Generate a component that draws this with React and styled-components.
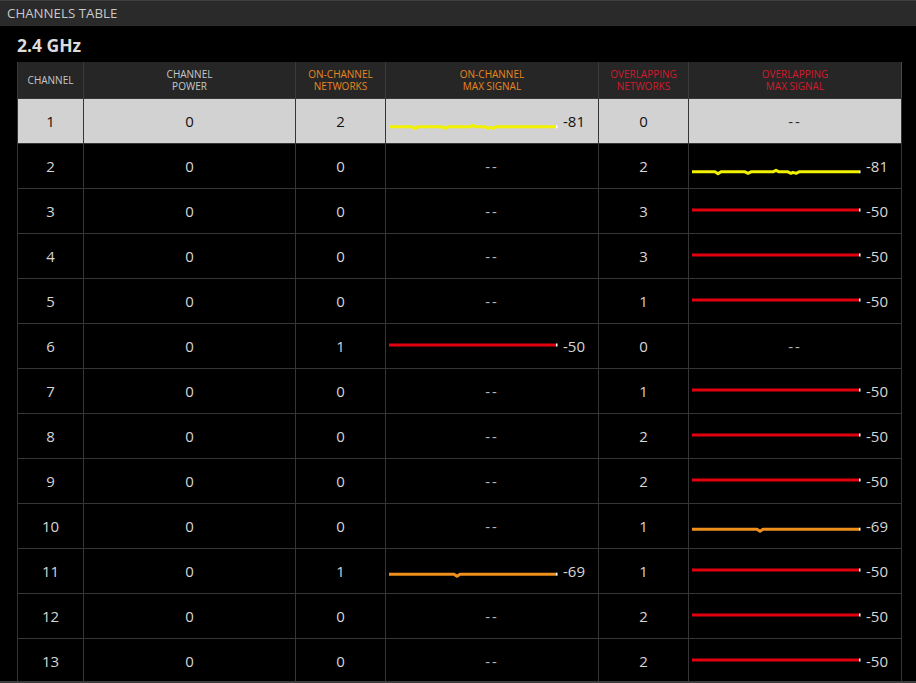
import React from "react";
import styled, { createGlobalStyle } from "styled-components";

const GlobalStyle = createGlobalStyle`
  html, body {
    margin: 0;
    padding: 0;
    background: #000;
  }
  body {
    font-family: "Open Sans", "Noto Sans", "Liberation Sans", sans-serif;
  }
`;

const COLORS = {
  yellow: "#f2f200",
  red: "#e3000f",
  orange: "#f0901c",
};

// little bumps on the lines, x offset and y delta
const SHAPES = {
  yellow: [
    [24, 0], [27, 2], [30, 0], [54, 0], [57, 1.5], [60, 0], [82, 0], [85, -1.5],
    [88, 0], [97, 0], [100, 1.5], [102, 0.5], [105, 1.5], [108, 0],
  ],
  orange: [[66, 0], [69, 2], [72, 0]],
  red: [],
};

const rows = [
  { ch: 1, power: 0, on: 2, onSig: { v: -81, c: "yellow" }, ov: 0, ovSig: null },
  { ch: 2, power: 0, on: 0, onSig: null, ov: 2, ovSig: { v: -81, c: "yellow" } },
  { ch: 3, power: 0, on: 0, onSig: null, ov: 3, ovSig: { v: -50, c: "red" } },
  { ch: 4, power: 0, on: 0, onSig: null, ov: 3, ovSig: { v: -50, c: "red" } },
  { ch: 5, power: 0, on: 0, onSig: null, ov: 1, ovSig: { v: -50, c: "red" } },
  { ch: 6, power: 0, on: 1, onSig: { v: -50, c: "red" }, ov: 0, ovSig: null },
  { ch: 7, power: 0, on: 0, onSig: null, ov: 1, ovSig: { v: -50, c: "red" } },
  { ch: 8, power: 0, on: 0, onSig: null, ov: 2, ovSig: { v: -50, c: "red" } },
  { ch: 9, power: 0, on: 0, onSig: null, ov: 2, ovSig: { v: -50, c: "red" } },
  { ch: 10, power: 0, on: 0, onSig: null, ov: 1, ovSig: { v: -69, c: "orange" } },
  { ch: 11, power: 0, on: 1, onSig: { v: -69, c: "orange" }, ov: 1, ovSig: { v: -50, c: "red" } },
  { ch: 12, power: 0, on: 0, onSig: null, ov: 2, ovSig: { v: -50, c: "red" } },
  { ch: 13, power: 0, on: 0, onSig: null, ov: 2, ovSig: { v: -50, c: "red" } },
];

const Window = styled.div`
  height: 683px;
  display: flex;
  flex-direction: column;
  overflow: hidden;
  box-sizing: border-box;
  border-bottom: 2px solid #3c3c3c;
`;

const TitleBar = styled.div`
  height: 26px;
  flex: none;
  box-sizing: border-box;
  border-top: 1px solid #3e3e3e;
  background: #2a2a2a;
  color: #c8c8c8;
  font-size: 13.3px;
  line-height: 25px;
  padding-left: 7px;
`;

const Content = styled.div`
  flex: 1;
  min-height: 0;
  overflow: hidden;
  padding: 0 15px 0 17px;
`;

const BandTitle = styled.h2`
  margin: 0;
  height: 36px;
  line-height: 38px;
  font-size: 17.5px;
  font-weight: 700;
  color: #dcdcdc;
`;

const Table = styled.table`
  border-collapse: collapse;
  table-layout: fixed;
  width: 884px;
  border-right: 1px solid #4a4a4a;
`;

const HeadCell = styled.th`
  height: 36px;
  padding: 0;
  background: #262626;
  border-left: 1px solid #3a3a3a;
  color: ${(p) => p.$color || "#c8c8c8"};
  font-size: 10px;
  font-weight: 400;
  line-height: 12px;
  text-align: center;
  vertical-align: middle;
  white-space: pre-line;
`;

const Row = styled.tr`
  background: ${(p) => (p.$selected ? "#d2d2d2" : "#000")};
  color: ${(p) => (p.$selected ? "#111" : "#d6d6d6")};
`;

const Cell = styled.td`
  height: 44px;
  padding: 0;
  border: 1px solid #363636;
  font-size: 15px;
  text-align: center;
  vertical-align: middle;
`;

const SignalWrap = styled.div`
  height: 44px;
  display: flex;
  align-items: center;
  padding-left: 2px;
`;

const Dash = styled.span`
  letter-spacing: 2px;
  opacity: 0.85;
`;

const SignalValue = styled.span`
  margin-left: 5px;
  font-size: 15px;
`;

function Spark({ signal }) {
  const w = 170;
  const base = 21 + (-50 - signal.v) * 0.22;
  const shape = SHAPES[signal.c];
  const pts = [[1, 0], ...shape, [w - 2, 0]]
    .map(([x, d]) => `${x},${(base + d).toFixed(1)}`)
    .join(" ");
  return (
    <svg width={w} height="44" style={{ display: "block", flex: "none" }}>
      <polyline
        points={pts}
        fill="none"
        stroke={COLORS[signal.c]}
        strokeWidth="3"
        strokeLinejoin="round"
      />
      <rect x={w - 2} y={base - 1.5} width="1.5" height="3" fill="#fff" />
    </svg>
  );
}

function SignalCell({ signal }) {
  if (!signal) {
    return (
      <Cell>
        <Dash>--</Dash>
      </Cell>
    );
  }
  return (
    <Cell>
      <SignalWrap>
        <Spark signal={signal} />
        <SignalValue>{signal.v}</SignalValue>
      </SignalWrap>
    </Cell>
  );
}

export default function App() {
  return (
    <>
      <GlobalStyle />
      <Window>
        <TitleBar>CHANNELS TABLE</TitleBar>
        <Content>
          <BandTitle>2.4 GHz</BandTitle>
          <Table>
            <colgroup>
              <col style={{ width: 66 }} />
              <col style={{ width: 212 }} />
              <col style={{ width: 90 }} />
              <col style={{ width: 213 }} />
              <col style={{ width: 90 }} />
              <col style={{ width: 213 }} />
            </colgroup>
            <thead>
              <tr>
                <HeadCell>CHANNEL</HeadCell>
                <HeadCell>{"CHANNEL\nPOWER"}</HeadCell>
                <HeadCell $color="#e8871e">{"ON-CHANNEL\nNETWORKS"}</HeadCell>
                <HeadCell $color="#e8871e">{"ON-CHANNEL\nMAX SIGNAL"}</HeadCell>
                <HeadCell $color="#d01c2c">{"OVERLAPPING\nNETWORKS"}</HeadCell>
                <HeadCell $color="#d01c2c">{"OVERLAPPING\nMAX SIGNAL"}</HeadCell>
              </tr>
            </thead>
            <tbody>
              {rows.map((r) => (
                <Row key={r.ch} $selected={r.ch === 1}>
                  <Cell>{r.ch}</Cell>
                  <Cell>{r.power}</Cell>
                  <Cell>{r.on}</Cell>
                  <SignalCell signal={r.onSig} />
                  <Cell>{r.ov}</Cell>
                  <SignalCell signal={r.ovSig} />
                </Row>
              ))}
            </tbody>
          </Table>
        </Content>
      </Window>
    </>
  );
}
